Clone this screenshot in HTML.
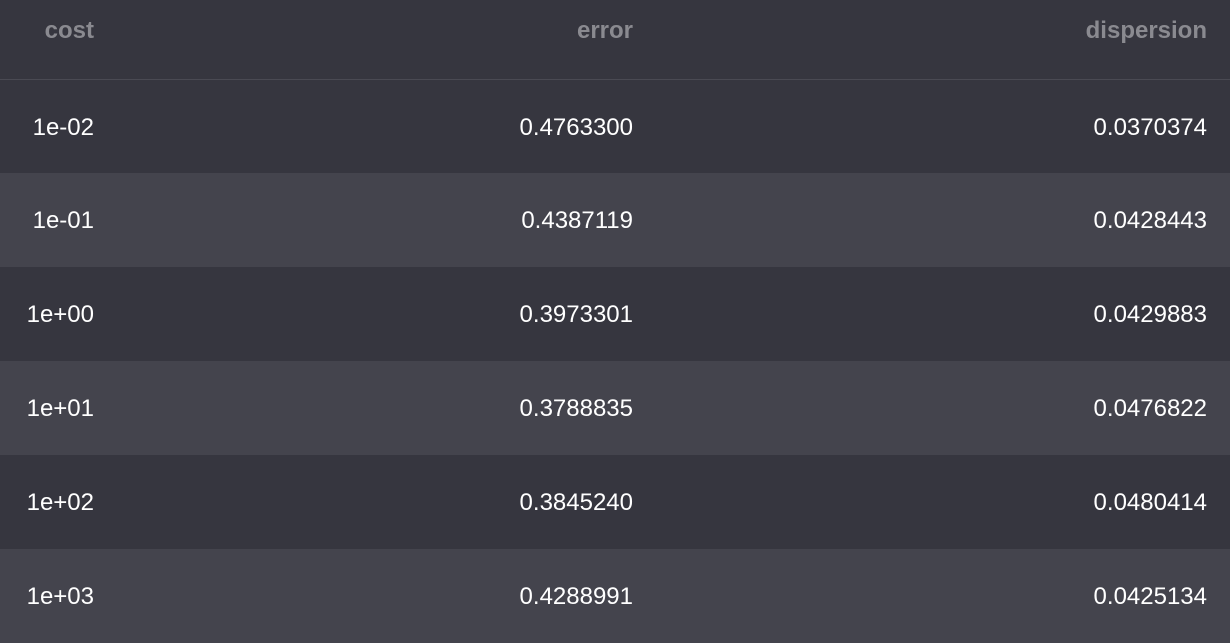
<!DOCTYPE html>
<html><head><style>
html,body{margin:0;padding:0;width:1230px;height:638px;overflow:hidden;background:#36363f;font-family:"Liberation Sans",sans-serif;}
.r{position:absolute;left:0;width:1230px;}
.c{position:absolute;top:0;height:100%;display:flex;align-items:center;justify-content:flex-end;font-size:24px;color:#fff;letter-spacing:0;padding-top:2px;box-sizing:border-box;}
.c1{right:1136px}.c2{right:597px}.c3{right:23px}
.h .c{color:#8a8a90;font-weight:bold;font-size:24px;}
</style></head><body>
<div class="r h" style="top:0;height:60px;background:#36363f"><div class="c c1">cost</div><div class="c c2">error</div><div class="c c3">dispersion</div></div>
<div class="r" style="top:79px;height:1px;background:#4a4a53"></div>
<div class="r" style="top:80px;height:93px;background:#36363f"><div class="c c1">1e-02</div><div class="c c2">0.4763300</div><div class="c c3">0.0370374</div></div>
<div class="r" style="top:173px;height:94px;background:#44444d"><div class="c c1">1e-01</div><div class="c c2">0.4387119</div><div class="c c3">0.0428443</div></div>
<div class="r" style="top:267px;height:94px;background:#36363f"><div class="c c1">1e+00</div><div class="c c2">0.3973301</div><div class="c c3">0.0429883</div></div>
<div class="r" style="top:361px;height:94px;background:#44444d"><div class="c c1">1e+01</div><div class="c c2">0.3788835</div><div class="c c3">0.0476822</div></div>
<div class="r" style="top:455px;height:94px;background:#36363f"><div class="c c1">1e+02</div><div class="c c2">0.3845240</div><div class="c c3">0.0480414</div></div>
<div class="r" style="top:549px;height:94px;background:#44444d"><div class="c c1">1e+03</div><div class="c c2">0.4288991</div><div class="c c3">0.0425134</div></div>
</body></html>
